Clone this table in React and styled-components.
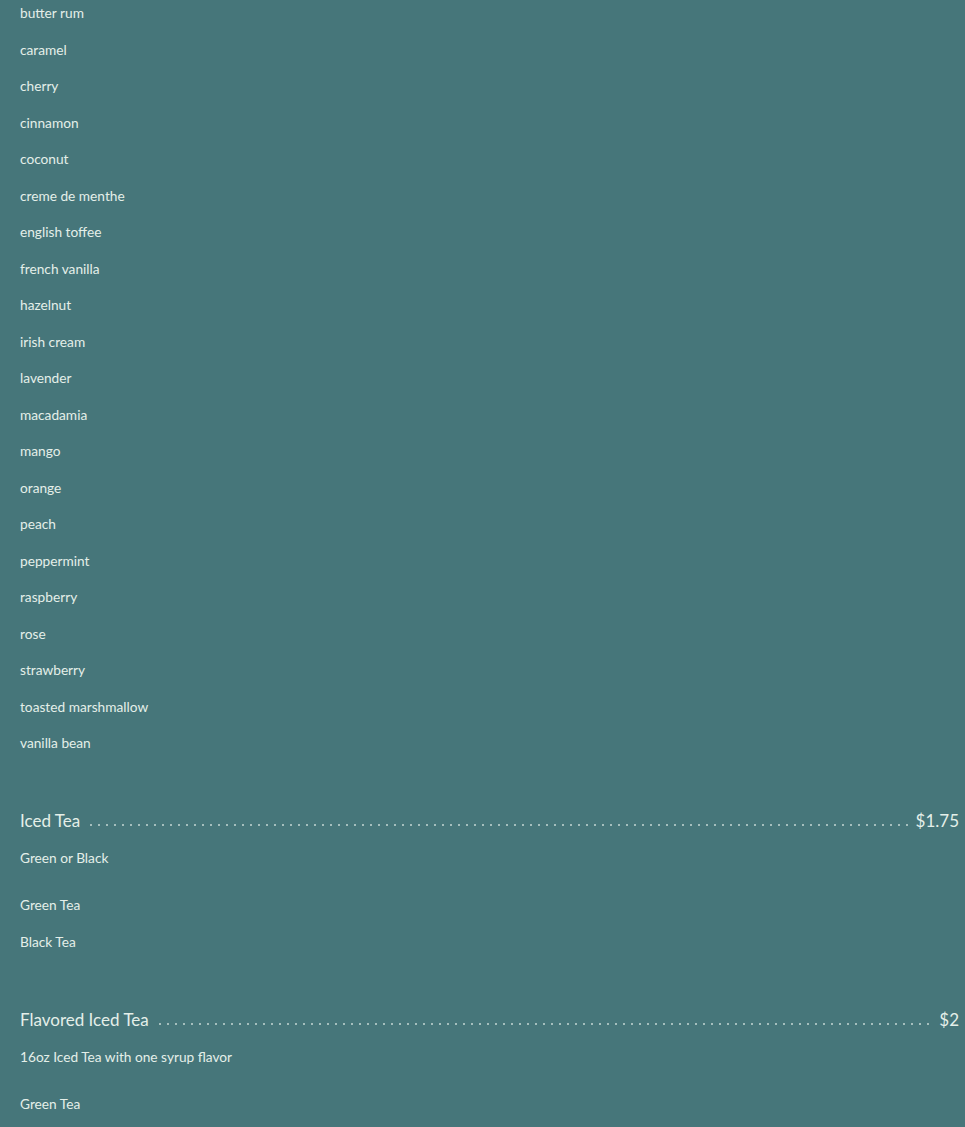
import React from "react";
import styled, { createGlobalStyle } from "styled-components";

const GlobalStyle = createGlobalStyle`
  html, body {
    margin: 0;
    padding: 0;
    background: #46767a;
  }
  body {
    font-family: Lato, "Liberation Sans", sans-serif;
    color: #e4efe9;
  }
`;

const Page = styled.div`
  min-height: 1127px;
  padding: 3px 6px 0 20px;
  box-sizing: border-box;
`;

const Section = styled.section`
  & + & {
    margin-top: 56px;
  }
`;

const HeadRow = styled.div`
  display: flex;
  align-items: baseline;
  font-size: 17px;
  line-height: 24px;
  margin-bottom: 15px;
`;

const Name = styled.span`
  flex: none;
`;

const Leader = styled.span`
  flex: 1;
  height: 4px;
  margin: 0 5px;
  background-image: radial-gradient(circle, rgba(228, 239, 233, 0.6) 0.9px, transparent 1.2px);
  background-size: 8px 4px;
  background-repeat: repeat-x;
  background-position: 2px 0;
`;

const Price = styled.span`
  flex: none;
`;

const Desc = styled.p`
  margin: 0 0 27px;
  font-size: 13.7px;
  line-height: 20px;
`;

const List = styled.ul`
  margin: 0;
  padding: 0;
  list-style: none;
`;

const Item = styled.li`
  font-size: 13.7px;
  line-height: 20px;
  margin-bottom: 16.5px;
  &:last-child {
    margin-bottom: 0;
  }
`;

const flavors = [
  "butter rum",
  "caramel",
  "cherry",
  "cinnamon",
  "coconut",
  "creme de menthe",
  "english toffee",
  "french vanilla",
  "hazelnut",
  "irish cream",
  "lavender",
  "macadamia",
  "mango",
  "orange",
  "peach",
  "peppermint",
  "raspberry",
  "rose",
  "strawberry",
  "toasted marshmallow",
  "vanilla bean",
];

const teas = [
  { name: "Iced Tea", price: "$1.75", desc: "Green or Black", options: ["Green Tea", "Black Tea"] },
  {
    name: "Flavored Iced Tea",
    price: "$2",
    desc: "16oz Iced Tea with one syrup flavor",
    options: ["Green Tea"],
  },
];

const App = () => {
  return (
    <Page>
      <GlobalStyle />
      <Section>
        <List>
          {flavors.map((f) => (
            <Item key={f}>{f}</Item>
          ))}
        </List>
      </Section>
      {teas.map((t) => (
        <Section key={t.name}>
          <HeadRow>
            <Name>{t.name}</Name>
            <Leader />
            <Price>{t.price}</Price>
          </HeadRow>
          <Desc>{t.desc}</Desc>
          <List>
            {t.options.map((o) => (
              <Item key={o}>{o}</Item>
            ))}
          </List>
        </Section>
      ))}
    </Page>
  );
};

export default App;
